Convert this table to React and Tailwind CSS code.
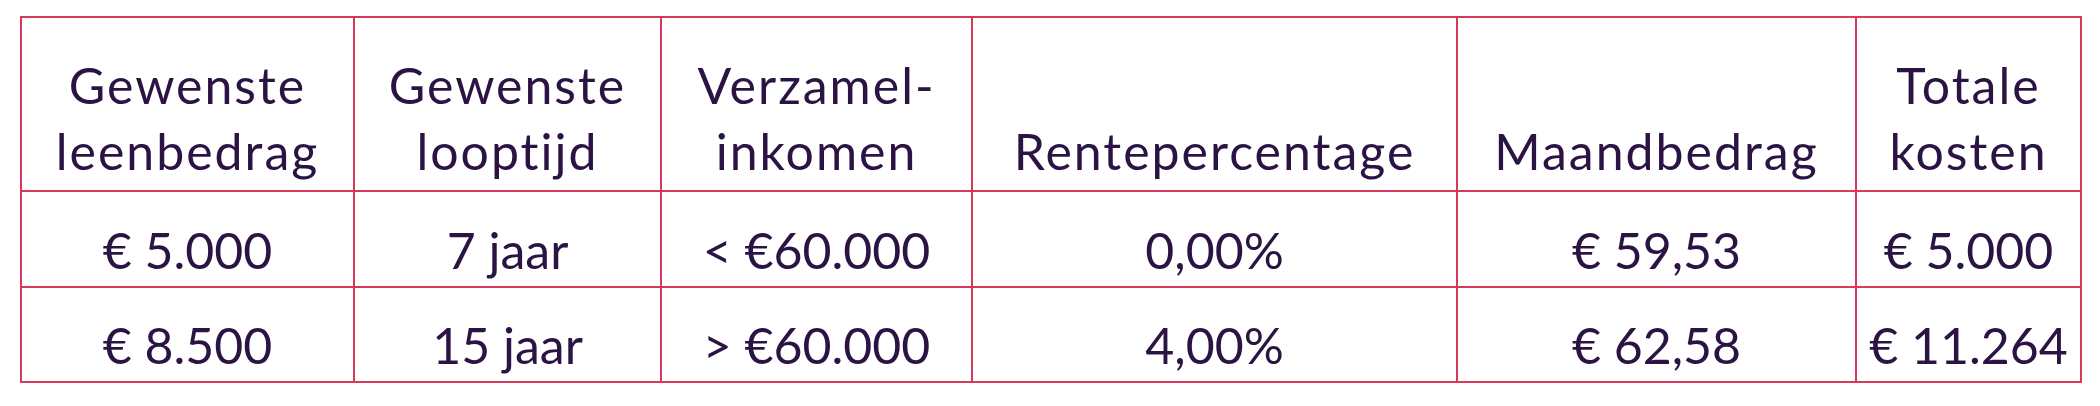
import React from "react";

const headers = [
  ["Gewenste", "leenbedrag"],
  ["Gewenste", "looptijd"],
  ["Verzamel-", "inkomen"],
  ["Rentepercentage"],
  ["Maandbedrag"],
  ["Totale", "kosten"],
];

const rows = [
  ["€ 5.000", "7 jaar", "< €60.000", "0,00%", "€ 59,53", "€ 5.000"],
  ["€ 8.500", "15 jaar", "> €60.000", "4,00%", "€ 62,58", "€ 11.264"],
];

const widths = ["w-[333px]", "w-[307px]", "w-[311px]", "w-[485px]", "w-[399px]", "w-[225px]"];

export default function App() {
  return (
    <div className="w-[2100px] h-[406px] bg-white pt-[16px] px-[20px] font-['Lato',sans-serif] text-[#2b1344]">
      <table className="w-[2060px] border-collapse table-fixed">
        <colgroup>
          {widths.map((w, i) => (
            <col key={i} className={w} />
          ))}
        </colgroup>
        <thead>
          <tr className="h-[174px]">
            {headers.map((h, i) => (
              <th
                key={i}
                className="border-2 border-[#d63a5a] align-bottom text-center font-normal text-[50px] tracking-[2px] leading-[66px] pb-[6px] px-0"
              >
                {h.map((line, j) => (
                  <div key={j}>{line}</div>
                ))}
              </th>
            ))}
          </tr>
        </thead>
        <tbody>
          {rows.map((r, ri) => (
            <tr key={ri} className={ri === 0 ? "h-[96px]" : "h-[95px]"}>
              {r.map((c, ci) => (
                <td
                  key={ci}
                  className="border-2 border-[#d63a5a] align-bottom text-center text-[50px] leading-[66px] pb-[3px] px-0"
                >
                  {c}
                </td>
              ))}
            </tr>
          ))}
        </tbody>
      </table>
    </div>
  );
}
